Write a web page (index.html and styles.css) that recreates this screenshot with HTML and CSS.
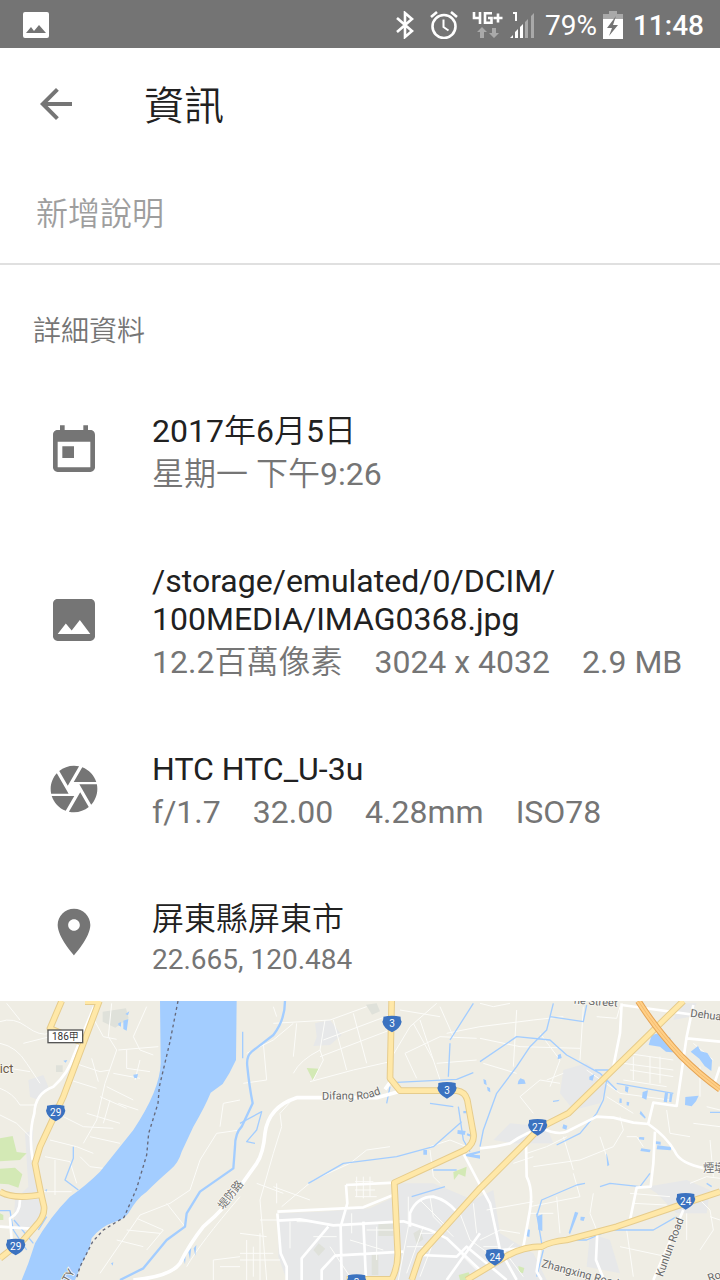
FILE: index.html
```html
<!DOCTYPE html>
<html lang="zh-Hant">
<head>
<meta charset="utf-8">
<meta name="viewport" content="width=device-width, initial-scale=1">
<title>資訊</title>
<link rel="stylesheet" href="styles.css">
</head>
<body>
<div class="status">
  <svg class="status-photo" viewBox="0 0 26 26" aria-hidden="true"><path fill="#fff" fill-rule="evenodd" d="M2 0h22q2 0 2 2v22q0 2-2 2H2q-2 0-2-2V2q0-2 2-2zM3 21h20l-7-8-5 6-3-4z"/></svg>
  <div class="status-right">
    <svg class="ic-bt" viewBox="0 0 20 28" fill="none" stroke="#fff" stroke-width="2.6" aria-hidden="true"><path d="M2 7l15 13-7 6V2l7 6L2 21"/></svg>
    <svg class="ic-alarm" viewBox="0 0 28 28" fill="none" stroke="#fff" stroke-width="2.6" aria-hidden="true"><circle cx="14" cy="15.500" r="11.500"/><path d="M1 6l6-5M27 6l-6-5"/><path stroke-width="2" d="M13.500 8.500V16l5 3.500"/></svg>
    <svg class="ic-net" viewBox="0 0 32 28" aria-hidden="true"><g fill="none" stroke="#fff" stroke-width="2.6"><path d="M2 1v6h7M8 1v12M20 2.200h-7v9.500h6.500V7H16M21.500 7h9M26 2.500v9"/></g><path fill="#a9a9a9" d="M5 21l5-5 5 5h-3v6H8v-6zM17 22l5 5 5-5h-3v-5h-4v5z"/></svg>
    <svg class="ic-signal" viewBox="0 0 26 28" aria-hidden="true"><path fill="none" stroke="#fff" stroke-width="2" d="M3 2h3v8"/><path fill="#fff" d="M0 27l3-3v3zM5 21l3-3v9H5zM10 16l3-3v14h-3z"/><path fill="#a9a9a9" d="M15 11l3-3v19h-3zM21 5l3-3v25h-3z"/></svg>
    <span class="percent">79%</span>
    <svg class="ic-battery" viewBox="0 0 20 28" aria-hidden="true"><path fill="#a9a9a9" d="M6 0h8v3h6v7H0V3h6z"/><path fill="#fff" d="M0 8h20v20H0z"/><path fill="#747474" d="M13 5L4 17h5l-3 8 9-11h-5z"/></svg>
    <time class="clock">11:48</time>
  </div>
</div>

<header class="appbar">
  <button class="back" type="button" aria-label="返回"><svg viewBox="0 0 24 24"><path d="M20 11H7.830l5.590-5.590L12 4l-8 8 8 8 1.410-1.410L7.830 13H20v-2z"/></svg></button>
  <h1 class="title">資訊</h1>
</header>

<main>
  <div class="description"><input class="description-input" type="text" aria-label="新增說明" placeholder="新增說明"></div>
  <h2 class="section">詳細資料</h2>
  <ul class="details">
    <li class="row">
      <svg class="icon" viewBox="0 0 24 24"><path d="M19 3h-1V1h-2v2H8V1H6v2H5c-1.110 0-1.990.9-1.990 2L3 19c0 1.100.89 2 2 2h14c1.100 0 2-.9 2-2V5c0-1.100-.9-2-2-2zm0 16H5V8h14v11zM7 10h5v5H7z"/></svg>
      <div class="text"><p class="primary">2017年6月5日</p><p class="secondary">星期一 下午9:26</p></div>
    </li>
    <li class="row">
      <svg class="icon" viewBox="0 0 24 24"><path d="M21 19V5c0-1.100-.9-2-2-2H5c-1.100 0-2 .9-2 2v14c0 1.100.9 2 2 2h14c1.100 0 2-.9 2-2zM8.500 13.500l2.500 3.010L14.500 12l4.500 6H5l3.500-4.500z"/></svg>
      <div class="text"><p class="primary">/storage/emulated/0/DCIM/<wbr>100MEDIA/IMAG0368.jpg</p><p class="secondary"><span>12.2百萬像素</span><span>3024 x 4032</span><span>2.9 MB</span></p></div>
    </li>
    <li class="row">
      <svg class="icon" viewBox="0 0 24 24"><path d="M9.400 10.500l4.770-8.260C13.470 2.090 12.750 2 12 2c-2.400 0-4.600.85-6.320 2.250l3.660 6.350.06-.1zM21.540 9c-.92-2.920-3.150-5.260-6-6.340L11.880 9h9.660zm.26 1h-7.490l.29.5 4.760 8.250C20.980 16.970 22 14.610 22 12c0-.69-.07-1.350-.2-2zM8.540 12l-3.900-6.750C3.010 7.030 2 9.390 2 12c0 .69.07 1.350.2 2h7.490l-1.150-2zm-6.080 3c.92 2.920 3.150 5.260 6 6.340L12.120 15H2.460zm11.270 0l-3.900 6.760c.7.15 1.420.24 2.170.24 2.400 0 4.600-.85 6.320-2.250l-3.660-6.350-.93 1.600z"/></svg>
      <div class="text"><p class="primary">HTC HTC_U-3u</p><p class="secondary"><span>f/1.7</span><span>32.00</span><span>4.28mm</span><span>ISO78</span></p></div>
    </li>
    <li class="row row-place">
      <svg class="icon" viewBox="0 0 24 24"><path d="M12 2C8.130 2 5 5.130 5 9c0 5.250 7 13 7 13s7-7.750 7-13c0-3.870-3.130-7-7-7zm0 9.500c-1.380 0-2.500-1.120-2.500-2.500s1.120-2.500 2.500-2.500 2.500 1.120 2.500 2.500-1.120 2.500-2.500 2.500z"/></svg>
      <div class="text"><p class="primary">屏東縣屏東市</p><p class="coords">22.665, 120.484</p></div>
    </li>
  </ul>

  <svg class="map" viewBox="0 3 2160 837" role="img" aria-label="屏東縣屏東市">
    <defs>
      <path id="shield" d="M-26-22Q0-28 26-22Q25-14 29-7Q26 12 0 25Q-26 12-29-7Q-25-14-26-22z"/>
      <path id="difang" d="M966 299L1080 298Q1120 294 1170 270"/>
    </defs>
    <rect width="2160" height="840" fill="#efede4"/>

    <!-- built-up areas -->
    <g fill="#e7e8e9">
      <path d="M838 640L960 635 1110 625 1175 595 1190 550 1300 550 1420 600 1480 570 1500 700 1600 760 1640 840H860L835 770z"/>
      <path d="M85 240L130 225 145 260 115 300 90 290zM75 400L100 390 95 480 130 590 130 640 90 680 40 690 45 600 85 560z"/>
      <path d="M945 70L990 60 1025 105 990 135 940 138 950 110zM1690 210L1760 190 1830 240 1800 310 1720 330 1680 280zM1480 420L1530 370 1640 380 1660 430 1540 430z"/>
      <path d="M1940 560L2060 540 2130 570 2120 640 2030 640 1970 580zM1770 700L1830 720 1860 820 1760 800zM2040 10L2090 10 2070 50 2020 60z"/>
    </g>
    <g fill="#dfe1da"><path d="M308 35l70-10 8 30-40 28-38-18zM1098 14l32-4 10 24-24 10zM1135 670h45v38h-45zM940 750l16-20 20 16-20 22zM1115 765h20v60h-20zM1240 700l20-12 10 30-20 14zM168 196h20v20h-20z"/></g>
    <g fill="#d3e9b5"><path d="M0 415l38-7 12 48 30 4-20 20-60 4zM0 506l45-3 22 20-12 40-30-10-25-2zM0 640l10 5v15H0zM920 204l38 2-20 34zM1360 516l40-16-4 30-20-8-14 18zM1555 798l18 6-4 16-12-4zM1376 825l30-8 10 23h-36z"/></g>

    <!-- minor streets -->
    <g class="lane">
      <path d="M0 65Q40 50 80 80T150 100M0 130Q50 140 80 190L120 250M0 265Q40 280 60 315H105M20 10L60 60M70 130L170 105M0 345L50 370 90 410M30 205L90 215"/>
      <path d="M335 10L325 110 350 150 315 250 290 360 250 430M280 55L310 110 350 118M355 150L475 140M225 190L300 215 330 210M275 175l20 70M340 220L420 235M420 180l-15 60M210 240L290 265M320 260L400 300M300 290L380 325M260 340L360 370M190 350L250 380 340 385M330 300L310 370M150 420L230 440M135 470L210 485M230 440L280 460M210 485L230 550M165 480v105M130 575H215M240 470L270 500 310 505M440 20L400 110 420 150 460 165M380 150v55l70 10M355 310l60 20M270 410l90 20"/>
      <path d="M720 390L650 400 600 480 570 570 510 610 420 645 300 820M500 610L555 680M410 655L490 690 440 750M350 720L430 740M380 690L480 700M720 300L670 310 660 380M560 800Q600 730 720 590M640 840V780L720 770M660 800h60"/>
      <path d="M820 70L990 60 1100 20M970 120L1170 45M960 170L1170 90M1000 60L1040 210M1060 40L1100 190M975 60L960 150 970 180 940 240M880 220Q900 180 960 150M930 245L1060 210 1170 185M740 160L820 120 880 70M790 130L800 240 730 250M890 70L880 170M820 20L830 50"/>
      <path d="M1170 180L1230 80 1310 10M1215 160L1320 110 1430 115M1250 235L1215 160M1240 70L1300 180M1320 20L1360 110M1310 190L1430 180M1200 30L1320 50M1340 100L1440 80M1260 60l60 180"/>
      <path d="M885 290L840 340 845 380 820 460 780 600 800 840M820 560L930 600M845 620L940 540 1050 490 1100 450 1170 440M770 550L850 580M780 660h60M720 760h100M740 720v120M760 740v90M720 780h120M780 700v140M830 550v60M720 700l80 10"/>
      <path d="M1225 590v90l-30 160M1270 680l-50 140M1260 600l80 80M1310 700l-50 130M1070 530v60M1090 530v65M1110 530v60M1065 545h55M1065 570h60M1065 590h65M870 665v80M1055 640v60M890 665h60M940 710h70M1100 690h90M1050 720l100 30M1130 680v100M990 740l60 90M1290 590l10 60 60 60M1260 700h40M1220 740h50M1380 760l60 60M1380 640l30 80 70 50M1420 610l10 90M1290 450l10 80 20 20M1290 440l60-20 50 20"/>
      <path d="M1440 80L1600 60 1690 50M1440 115L1560 140 1740 145M1450 190L1550 220M1550 30L1540 200M1750 20L1740 180M1620 100L1680 180 1650 260M1560 290L1620 240 1680 250M1560 290L1600 340M1640 240L1690 220M1760 210L1860 280 2010 300M1790 50L1850 55 1860 20M1880 160L2020 180M1870 190L2020 210M1890 210L2020 230M1870 240L2000 260M1900 170v70M1950 170v80M1980 170v80M1820 290L1900 340M1860 350L1870 390 1840 440 1740 480 1600 500M1690 410L1720 510M1580 460L1640 440 1700 410M1800 410l20 60M1880 410h30l20 30"/>
      <path d="M1600 470L1540 490M1720 520L1740 590 1590 620M1670 590L1680 700M1460 630L1600 605M1590 640L1660 640M1780 580L1770 640 1790 690M1890 580L2010 590M1900 610L2000 615M2000 330L2010 400 2070 410M2100 200v90M2120 320L2160 330M2080 370L2160 380M2130 420L2140 530M2070 550l50-20 40 5M2090 590l40 40 10 60-40 60M2060 640v80M2130 650l30 10M1880 690L1900 830M1860 740L2000 770M2080 130l60 50M1440 10L1480 20 1530 10M1440 720l60-30 60 10M1450 740h50M1480 790l60-60M1510 750l60 80"/>
    </g>

    <!-- creeks -->
    <g class="creek">
      <path d="M220 440V475L195 540 235 570M0 632H30L40 690 80 750M42 660L100 730M140 650L115 690"/>
      <path class="stream" d="M855 3Q855 60 820 105L755 155Q738 170 742 200Q748 260 758 310L725 380Q705 400 705 440L700 505 600 575 560 640 555 680 500 720 430 805 360 840"/>
      <path d="M720 370L785 335 770 390 740 425 765 430M728 95v80M925 550L1030 490 1190 470 1300 440 1385 365M1190 247L1370 238 1420 218M1160 310l10-50M1290 310L1360 320M1350 130L1345 230M1350 120L1420 10M1375 320L1390 420 1410 455M1235 590L1335 560M1300 510h70"/>
      <path d="M1660 10L1640 90 1590 140 1550 200 1490 280 1450 390 1440 440M1440 185L1550 110 1650 120 1700 165 1800 220 1850 270M1785 210h40l-15 90-20 40-50 60-70 35M1650 50l100 15 10-50M1850 250L2020 280M1800 560L1830 550 1920 560 1950 520M1610 650L1625 600 1730 555 1755 550M1610 640l15 90M1720 720H1760L1830 690H1960L2030 650M1610 830l20-80M2120 550l15 10M2130 337h30"/>
    </g>
    <g fill="#a3cdff">
      <path d="M480 3H710L708 180Q690 220 668 252L632 278Q615 320 580 380L545 455Q535 490 510 510Q470 545 440 575Q410 595 385 640Q370 660 345 665Q300 680 275 715Q270 750 250 780L225 840H65L85 790 105 730Q150 650 210 590Q260 555 300 515L400 390Q480 270 482 190z"/>
      <path d="M355 70l8-4v14l-8-4zM370 62l15-5-5 35-10-5zM376 42l12-8-4 12zM400 224l14-2-3 13-9-2zM190 182l12-2-5 8zM135 570l7-3-3 8zM550 770l8-12-3 35zM565 755l9-12-4 35zM581 745l8-10-3 32zM333 790l7-3-2 10z"/>
      <path d="M1955 105l20-5 15 20 20-8 10 28 13 18-35-3-18-15-34-5zM2072 155l22-17 8 16 20 5 14 22-2 32-20-15-16-22z"/>
      <path d="M2056 291l40-4-8 17-13 15-20-4zM1928 276l16-5-5 28-13-6zM1995 277l9 3-3 27-10-2zM2010 280l8 2-4 25-7-2zM1876 258l10 3-3 17-8-5zM1859 295l6 1v13l-7-1zM1880 305l8 2-2 10-6-1zM1922 332l15 20-2 4-16-15zM1967 424l15 1v9l-15-2zM1972 436l42 5-2 10-42-3zM1924 445l28 4-3 8-28-4zM1918 411l15 1-1 8-15-2zM1555 243l6-8 12 4 4 12-24 2zM1659 302l20-3-4 5-16 2zM1674 165l8-4 3 13-12 4zM1768 230l15-8-5 20-10-3zM1450 237l8 4 2 15-8-5zM1461 260l9 4 1 13-8-5zM1690 373l12 4-3 12-12-4zM1820 460l8 35-6 4-3-35zM1613 648l14-5v50l-12-4zM1580 688l10 1-2 22-10-3zM1725 635l10 3-25 65-4-5zM1742 650l13 1-4 12-10-2z"/>
      <path d="M1373 390h0v0h-0zM1270 450h11v14h-11zM1373 390l24 3-3 12-22-4zM1402 400l14 5-2 6-14-5zM1400 462l40-10v6l-20 6 20 2v10l-45-8zM1390 333h10v7h-10z"/>
    </g>
    <path class="border" d="M534 3L510 125 478 260 474 310 446 400 440 465 410 565 372 652 310 690 278 725 240 800 228 840"/>

    <!-- local roads -->
    <g class="road">
      <path d="M282 20L222 165Q205 220 160 260Q105 280 103 340Q85 400 98 480M60 600Q60 640 30 655L35 720M0 680L90 686M0 770l40-30"/>
      <path class="road-wide" d="M400 840Q510 830 540 790Q570 730 610 680Q680 620 720 560L770 490Q790 460 795 400Q805 320 890 293H1130L1195 275M1155 268L1175 240"/>
      <path d="M1038 555L1185 548M1038 555L1042 610 1022 680 1025 840M832 635L1090 622 1180 585M832 662L900 658 1000 676 1210 664 1290 690 1340 715 1440 810M832 640L842 760 860 800V840M985 680L905 775V840M1210 755L1005 767 965 810V840M1090 665L1098 840M1230 680L1230 640Q1250 590 1300 590Q1340 600 1370 635M1390 460L1440 555M1260 765L1370 770 1400 740 1520 840M1340 840L1440 700"/>
      <path d="M1865 10L1860 100 1838 210M1865 15L2160 55M2080 15L2060 110 2030 318 1960 308 1945 370M2060 115L2160 125M1440 445Q1490 440 1530 430Q1580 395 1625 385Q1680 410 1710 390L1790 350 1840 353 1900 368 1945 372Q2000 410 2025 455Q2040 490 2115 505M1965 395L1960 490 1952 560 1910 563 1890 660M1578 425L1580 530Q1600 570 1590 630L1570 740M1440 555L1470 610 1500 750 1550 840M1792 695L1788 780 1812 840M2050 630L1960 840M2140 260L2160 200M1620 745l-10 70 15 25M1500 750l70-5"/>
    </g>

    <!-- highways -->
    <g class="highway-edge">
      <path id="h1" d="M298 3L190 290 120 440 105 490Q120 570 132 620Q135 650 105 680L70 720 0 775M185 3L150 85 240 125M0 575Q40 600 130 583M255 5h45"/>
      <path id="h2" d="M1175 3L1170 235 1200 272H1370Q1395 275 1402 300L1420 400Q1425 430 1395 450L1183 548 1193 755Q1195 800 1175 838H1040"/>
      <path id="h3" d="M2050 3L1920 130 1705 340 1620 383 1580 425 1440 565 1260 765 1235 840M1400 840L1500 780Q1560 740 1625 740Q1650 725 1700 720L1850 680 2040 615 2160 575"/>
    </g>
    <g class="highway">
      <path d="M298 3L190 290 120 440 105 490Q120 570 132 620Q135 650 105 680L70 720 0 775M185 3L150 85 240 125M0 575Q40 600 130 583M255 5h45"/>
      <path d="M1175 3L1170 235 1200 272H1370Q1395 275 1402 300L1420 400Q1425 430 1395 450L1183 548 1193 755Q1195 800 1175 838H1040"/>
      <path d="M2050 3L1920 130 1705 340 1620 383 1580 425 1440 565 1260 765 1235 840M1400 840L1500 780Q1560 740 1625 740Q1650 725 1700 720L1850 680 2040 615 2160 575"/>
    </g>
    <path class="freeway-edge" d="M1915 3Q1970 90 2045 170Q2100 225 2160 268"/>
    <path class="freeway" d="M1915 3Q1970 90 2045 170Q2100 225 2160 268"/>
    <path class="freeway-mid" d="M1915 3Q1970 90 2045 170Q2100 225 2160 268"/>

    <!-- route markers -->
    <g class="shields">
      <use href="#shield" x="167" y="339"/><use href="#shield" x="47" y="741"/>
      <use href="#shield" x="1176" y="72"/><use href="#shield" x="1341" y="271"/>
      <use href="#shield" x="1070" y="848"/><use href="#shield" x="1613" y="382"/>
      <use href="#shield" x="1485" y="772"/><use href="#shield" x="2057" y="604"/>
    </g>
    <rect x="144" y="90" width="104" height="38" fill="#fff" stroke="#555" stroke-width="4"/>
    <g class="route-no">
      <text x="167" y="349">29</text><text x="47" y="751">29</text><text x="1176" y="82">3</text><text x="1341" y="281">3</text>
      <text x="1070" y="857">3</text><text x="1613" y="392">27</text><text x="1485" y="782">24</text><text x="2057" y="614">24</text>
      <text class="route-dark" x="196" y="119">186甲</text>
    </g>
    <g class="place">
      <text class="district" x="-1" y="218">ict</text>
      <text><textPath href="#difang">Difang Road</textPath></text>
      <text transform="translate(670 630) rotate(-52)">堤防路</text>
      <text transform="translate(1721 11) rotate(4)">ne Street</text>
      <text transform="translate(2070 50) rotate(7)">Dehua</text>
      <text x="2110" y="516">煙墩</text>
      <text transform="translate(1988 832) rotate(-70)">Kunlun Road</text>
      <text transform="translate(1623 800) rotate(15)">Zhangxing Road</text>
      <text transform="translate(2128 846) rotate(-20)">Ro</text>
      <text transform="translate(205 850) rotate(-60)">TY</text>
    </g>
  </svg>
</main>
</body>
</html>
```

FILE: styles.css
```css
* { box-sizing: border-box; }
body {
  margin: 0;
  background: #fff;
  color: #212121;
  font-family: Roboto, "Noto Sans CJK TC DemiLight", "Noto Sans CJK TC Light", "Noto Sans CJK TC", sans-serif;
  font-size: 32px;
  line-height: 38px;
}
h1, h2, p, ul { margin: 0; padding: 0; font-weight: 400; }
svg { display: block; flex: none; }

.status {
  display: flex;
  align-items: center;
  justify-content: space-between;
  height: 48px;
  padding: 2px 16px 0 23px;
  background: #747474;
  color: #fff;
}
.status-photo { width: 26px; height: 26px; }
.status-right { display: flex; align-items: center; }
.ic-bt { width: 20px; height: 28px; margin-right: 15px; }
.ic-alarm { width: 28px; height: 28px; margin-right: 14px; }
.ic-net { width: 32px; height: 28px; margin-right: 6px; }
.ic-signal { width: 26px; height: 28px; margin-right: 9px; }
.percent { margin-right: 6px; padding-top: 2px; font-size: 28px; }
.ic-battery { width: 20px; height: 28px; margin-right: 10px; }
.clock { padding-top: 2px; font-size: 28px; font-weight: 500; }

.appbar { display: flex; align-items: center; gap: 64px; height: 112px; padding: 0 32px; }
.back { width: 48px; height: 48px; padding: 0; border: 0; background: none; cursor: pointer; }
.back svg { width: 48px; height: 48px; fill: #757575; }
.title { padding-top: 5px; font-size: 40px; line-height: 48px; }

.description { padding: 33px 36px 28px; border-bottom: 2px solid #e0e0e0; }
.description-input {
  display: block;
  width: 100%;
  height: 42px;
  padding: 0;
  border: 0;
  outline: 0;
  background: none;
  color: #212121;
  font: inherit;
}
.description-input::placeholder { color: #9e9e9e; opacity: 1; }

.section { padding: 49px 33px 0; color: #757575; font-size: 28px; line-height: 36px; }
.details {
  display: flex;
  flex-direction: column;
  gap: 69px;
  padding: 62px 32px 24px 46px;
  list-style: none;
}
.row { display: flex; align-items: center; gap: 50px; }
.row-place { align-items: flex-start; }
.icon { width: 56px; height: 60px; padding-bottom: 4px; fill: #757575; }
.row-place .icon { padding: 4px 0 0; }
.text { display: flex; flex: 1; flex-direction: column; gap: 5px; min-width: 0; }
.secondary { display: flex; flex-wrap: wrap; column-gap: 32px; color: #757575; }
.coords { color: #757575; font-size: 28px; line-height: 34px; }

.map { width: 100%; height: auto; }
.map path { stroke-linejoin: round; }
.lane { fill: none; stroke: #fcfcf9; stroke-width: 3; }
.creek { fill: none; stroke: #a3cdff; stroke-width: 4; }
.stream { stroke-width: 7; }
.border { fill: none; stroke: #66697a; stroke-width: 4; stroke-dasharray: 9 9; }
.road { fill: none; stroke: #fff; stroke-width: 8; }
.road-wide { stroke-width: 11; }
.highway-edge { fill: none; stroke: #e6cc8c; stroke-width: 20; }
.highway { fill: none; stroke: #ffe8a8; stroke-width: 14; }
.freeway-edge { fill: none; stroke: #e5a455; stroke-width: 20; }
.freeway { fill: none; stroke: #ffcf87; stroke-width: 14; }
.freeway-mid { fill: none; stroke: #eeb365; stroke-width: 2; }
.shields { fill: #3b72c0; }
.route-no { fill: #fff; font-size: 30px; text-anchor: middle; }
.route-dark { fill: #333; }
.place { fill: #686868; stroke: #f7f6f1; stroke-width: 5; paint-order: stroke; font-size: 33px; }
.district { fill: #6b5b48; font-size: 38px; }
```
